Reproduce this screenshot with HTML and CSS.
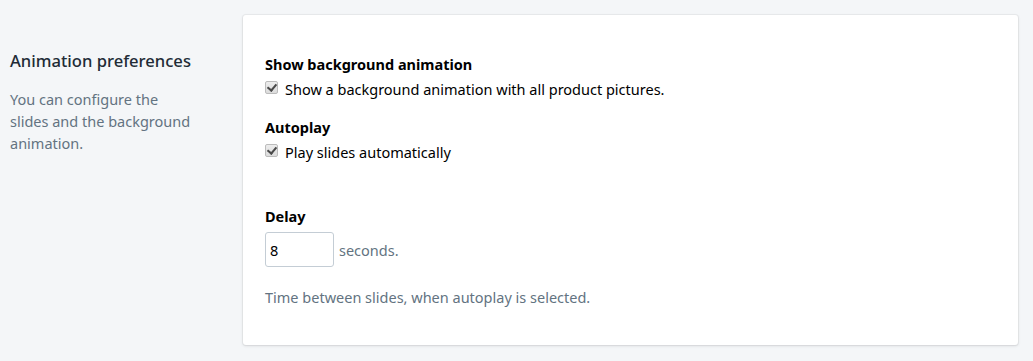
FILE: index.html
```html
<!DOCTYPE html>
<html lang="en">
<head>
	<meta charset="UTF-8">
	<title>Animation preferences</title>
	<link rel="stylesheet" href="styles.css">
</head>
<body>
	<div class="layout">
		<div class="annotation">
			<h2 class="annotation-title">Animation preferences</h2>
			<p class="annotation-text">You can configure the slides and the background animation.</p>
		</div>
		<div class="card">
			<div class="field">
				<div class="field-label">Show background animation</div>
				<label class="check">
					<input type="checkbox" checked>
					<span>Show a background animation with all product pictures.</span>
				</label>
			</div>
			<div class="field">
				<div class="field-label">Autoplay</div>
				<label class="check">
					<input type="checkbox" checked>
					<span>Play slides automatically</span>
				</label>
			</div>
			<div class="field field-delay">
				<div class="field-label">Delay</div>
				<div class="delay-row">
					<input type="text" class="delay-input" value="8">
					<span class="suffix">seconds.</span>
				</div>
				<p class="help">Time between slides, when autoplay is selected.</p>
			</div>
		</div>
	</div>
</body>
</html>
```

FILE: styles.css
```css
* {
	margin: 0;
	box-sizing: border-box;
}
body {
	background-color: #f4f6f8;
	font-family: "Noto Sans", "Open Sans", sans-serif;
	font-size: 14.5px;
	color: #212b36;
}
.layout {
	display: flex;
	padding: 15px 15px 16px 0;
}
.annotation {
	width: 243px;
	flex-shrink: 0;
	padding: 34px 43px 0 10px;
}
.annotation-title {
	font-size: 16.6px;
	font-weight: 500;
	line-height: 24px;
	color: #212b36;
}
.annotation-text {
	margin-top: 15px;
	line-height: 22px;
	color: #637381;
}
.card {
	flex: 1;
	background-color: #fff;
	border-radius: 3px;
	box-shadow: 0 0 0 1px rgba(63, 63, 68, 0.05), 0 1px 3px 0 rgba(63, 63, 68, 0.15);
	padding: 39px 22px 38px;
}
.field + .field {
	margin-top: 18px;
}
.field-delay {
	margin-top: 44px !important;
}
.field-label {
	font-weight: 700;
	line-height: 20px;
	color: #000;
}
.check {
	display: flex;
	align-items: center;
	margin-top: 5px;
	line-height: 20px;
	color: #000;
}
.check input {
	appearance: none;
	width: 13px;
	height: 13px;
	margin: 0 7px 3px 0;
	border: 1px solid #bcbcbc;
	border-radius: 2px;
	background: linear-gradient(#ededed, #dcdcdc);
	position: relative;
}
.check input:checked::after {
	content: "";
	position: absolute;
	left: 3px;
	top: 0px;
	width: 4px;
	height: 7px;
	border-right: 2px solid #4a4a4a;
	border-bottom: 2px solid #4a4a4a;
	transform: rotate(40deg);
}
.delay-row {
	display: flex;
	align-items: center;
	margin-top: 6px;
}
.delay-input {
	width: 69px;
	height: 35px;
	border: 1px solid #c4cdd5;
	border-radius: 3px;
	padding: 0 4px;
	font-family: inherit;
	font-size: 14.5px;
	color: #000;
}
.suffix {
	margin-left: 5px;
	color: #637381;
}
.help {
	margin-top: 20px;
	line-height: 20px;
	color: #637381;
}
```
